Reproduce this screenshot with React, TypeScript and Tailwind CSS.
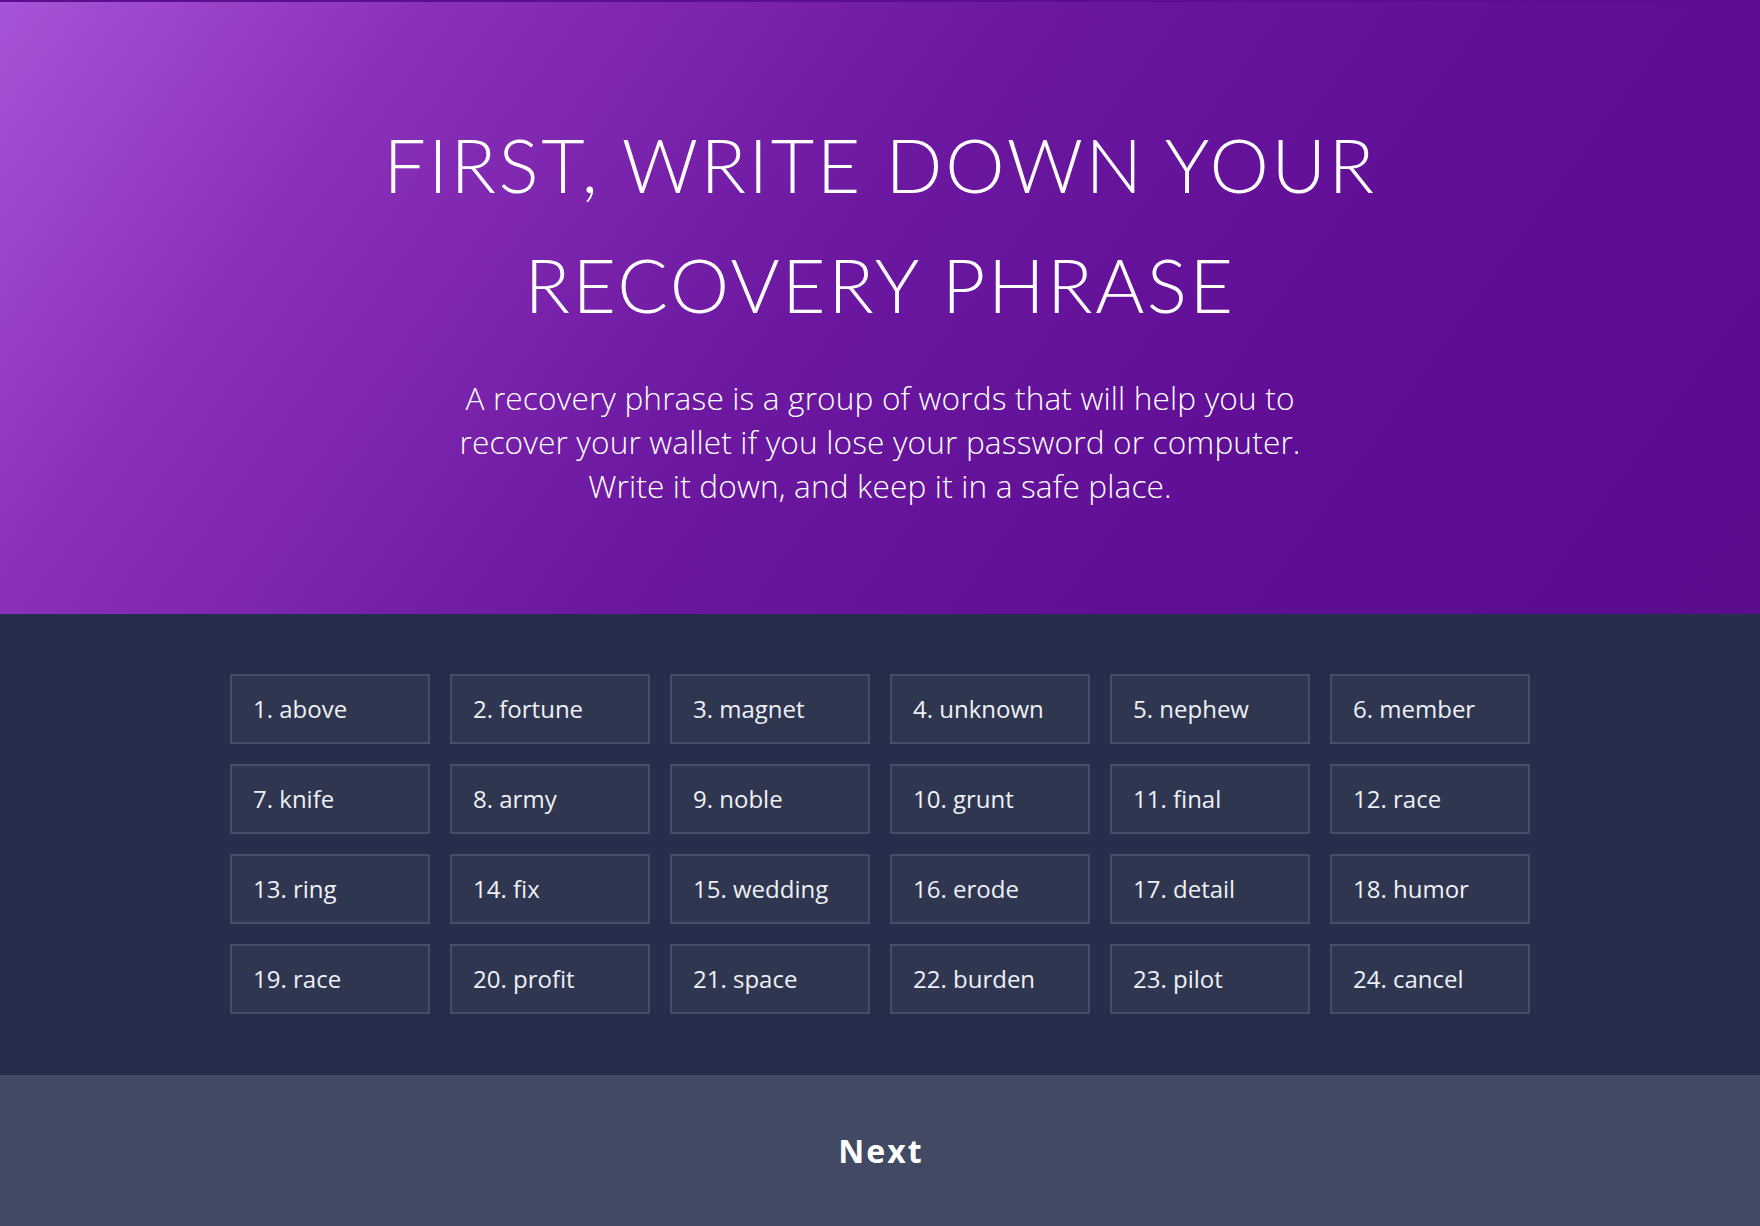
import React from 'react';

const words = [
  'above', 'fortune', 'magnet', 'unknown', 'nephew', 'member',
  'knife', 'army', 'noble', 'grunt', 'final', 'race',
  'ring', 'fix', 'wedding', 'erode', 'detail', 'humor',
  'race', 'profit', 'space', 'burden', 'pilot', 'cancel',
];

const WordBox: React.FC<{ index: number; word: string }> = ({ index, word }) => (
  <div className="h-[70px] flex items-center pl-[21px] bg-[#2f3650] border-2 border-[#474f67] text-[24px] text-[#eef0f5] font-['Open_Sans',sans-serif]">
    {index}. {word}
  </div>
);

export default function App() {
  return (
    <div className="w-full h-[1226px] overflow-hidden flex flex-col bg-[#252e4a]">
      <header className="h-[614px] shrink-0 border-t-2 border-[#5a0e90] bg-[linear-gradient(126deg,#a654d9_0%,#8a30b8_20%,#6c18a1_46%,#600f96_70%,#5a0b8e_100%)] flex flex-col items-center pt-[102px]">
        <h1 className="text-center text-white font-['Lato',sans-serif] font-light text-[75px] leading-[120px] tracking-[0.034em]">
          FIRST, WRITE DOWN YOUR
          <br />
          RECOVERY PHRASE
        </h1>
        <p className="mt-[32px] text-center text-white font-['Open_Sans',sans-serif] font-light text-[31.6px] leading-[44px] tracking-[0.005em]">
          A recovery phrase is a group of words that will help you to
          <br />
          recover your wallet if you lose your password or computer.
          <br />
          Write it down, and keep it in a safe place.
        </p>
      </header>

      <main className="pt-[60px] pb-[61px] flex justify-center shrink-0">
        <div className="grid grid-cols-[repeat(6,200px)] gap-[20px]">
          {words.map((w, i) => (
            <WordBox key={i} index={i + 1} word={w} />
          ))}
        </div>
      </main>

      <footer className="h-[151px] shrink-0 bg-[#424a63] flex items-center justify-center">
        <span className="text-white font-['Open_Sans',sans-serif] font-bold text-[32px] tracking-[2px] pl-[2px]">
          Next
        </span>
      </footer>
    </div>
  );
}
